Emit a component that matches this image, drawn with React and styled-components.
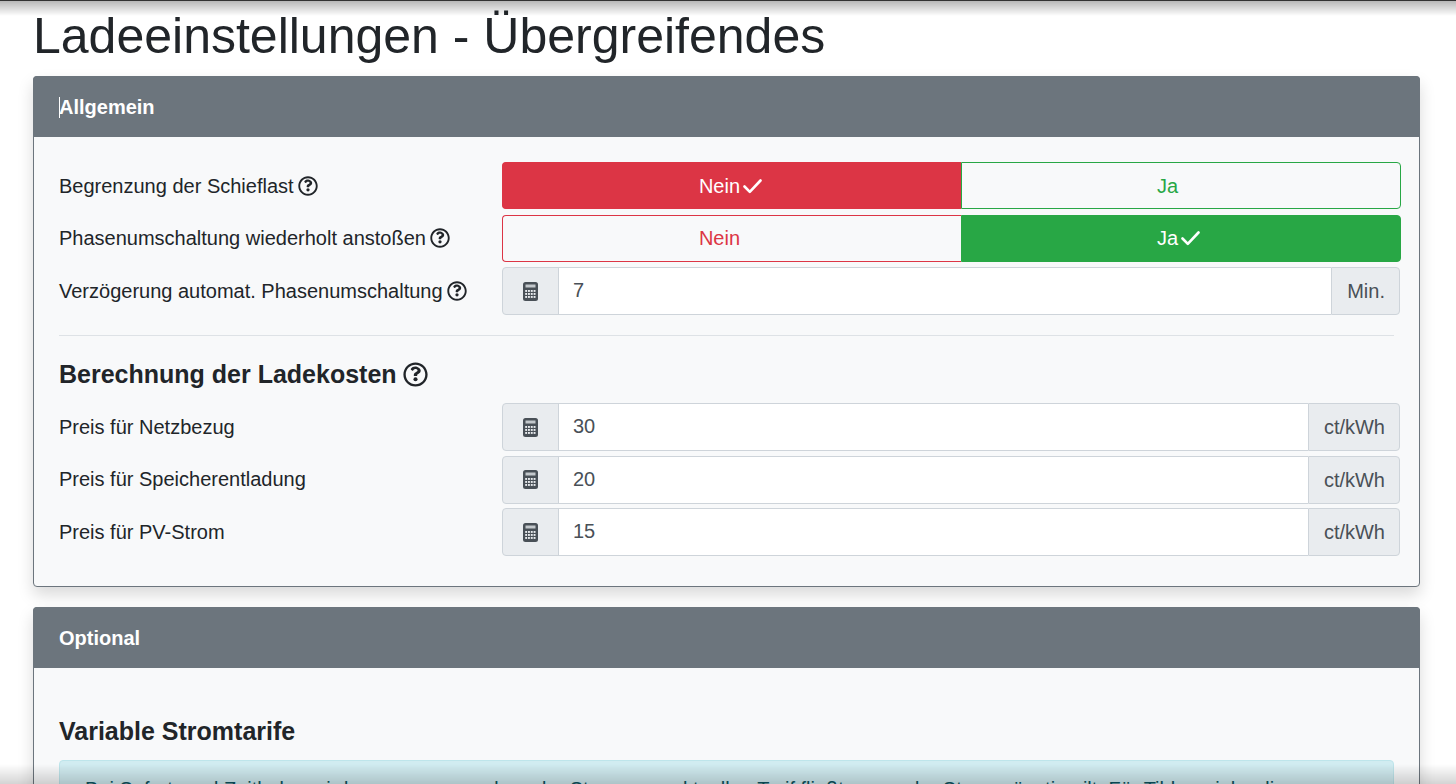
import React from 'react';
import styled, { createGlobalStyle } from 'styled-components';

const Global = createGlobalStyle`
  html, body { margin: 0; padding: 0; height: 784px; overflow: hidden; background: #fff; }
  * { box-sizing: border-box; }
  body { font-family: "Liberation Sans", Arial, sans-serif; font-size: 20px; line-height: 1.5; color: #212529; }
`;
const Page = styled.div`padding: 0 36px 0 33px; height: 784px; overflow: hidden;`;
const Title = styled.h1`margin: 0 0 10px; padding-top: 6px; font-size: 50px; font-weight: 400; line-height: 60px; color: #212529;`;
const Shade = styled.div`
  position: fixed; left: 0; right: 0; z-index: 5; pointer-events: none;
  ${p => p.$top
    ? `top: 0; height: 16px; border-top: 1px solid #333; background: linear-gradient(to bottom, rgba(0,0,0,.28), rgba(0,0,0,0));`
    : `bottom: 0; height: 20px; background: linear-gradient(to top, rgba(0,0,0,.17), rgba(0,0,0,0));`}
`;
const Card = styled.section`
  margin-bottom: 20px; background: #f8f9fa; border: 1px solid #6c757d; border-radius: 4px;
  box-shadow: 0 8px 16px rgba(0,0,0,.15);
`;
const CardHead = styled.header`
  height: 61px; margin: -1px -1px 0; padding: 0 26px; display: flex; align-items: center; position: relative;
  background: #6c757d; color: #fff; font-weight: 700; border-radius: 4px 4px 0 0;
`;
const Caret = styled.span`position: absolute; left: 26px; top: 21px; width: 1px; height: 21px; background: #fff;`;
const CardBody = styled.div`padding: 25px 25px 30px;`;
const Row = styled.div`
  display: grid; grid-template-columns: 443px 1fr; align-items: center; min-height: 48px; margin-bottom: 4.5px;
  &:last-child { margin-bottom: 0; }
`;
const Label = styled.div`display: flex; align-items: center; gap: 4px; margin-top: -0.6px;`;
const Help = styled.svg`flex: none; width: ${p => p.$size}px; height: ${p => p.$size}px; display: block;`;
const HelpIcon = ({ size = 20 }) => (
  <Help $size={size} viewBox="0 0 512 512" fill="#212529">
    <path d="M256 8C119 8 8 119 8 256s111 248 248 248 248-111 248-248S393 8 256 8zm0 448c-110.500 0-200-89.500-200-200S145.500 56 256 56s200 89.500 200 200-89.500 200-200 200z"/>
    <path d="M363 176c0 67-72 68-72 93v6c0 6.600-5.400 12-12 12h-46c-6.600 0-12-5.400-12-12v-9c0-36 27.400-50.400 48-62 17.600-9.900 28.400-16.600 28.400-29.700 0-17.300-22-28.800-39.900-28.800-23.200 0-34 11-49.100 30-4 5.100-11.500 6-16.600 2.100l-28-21.200c-5.100-3.900-6.300-11-2.700-16.300C184.800 107 210 92 250.800 92c42.600 0 112.200 33.900 112.200 84z"/>
    <circle cx="256" cy="354" r="42"/>
  </Help>
);
const Toggle = styled.div`display: grid; grid-template-columns: 459px 1fr; align-self: start; width: 899px; height: 47px;`;
const ToggleBtn = styled.div`
  display: flex; align-items: center; justify-content: center; gap: 3px; padding-right: ${p => p.$first ? 3 : 5}px;
  border: 1px solid ${p => p.$color};
  color: ${p => p.$on ? '#fff' : p.$color};
  background: ${p => p.$on ? p.$color : 'transparent'};
  border-radius: ${p => p.$first ? '4px 0 0 4px' : '0 4px 4px 0'};
  ${p => p.$first ? 'border-right-width: 0;' : ''}
`;
const Check = styled.svg`width: 19px; height: 18px; display: block; visibility: ${p => p.$shown ? 'visible' : 'hidden'};`;
const CheckIcon = ({ shown }) => (
  <Check $shown={shown} viewBox="0 0 19 18" fill="none" stroke="#fff" strokeWidth="2.600" strokeLinecap="round" strokeLinejoin="round">
    <path d="M1.500 9.500 6.800 14.800 17.500 3.500"/>
  </Check>
);
const InputGroup = styled.div`display: flex; align-items: stretch; width: 898px; height: 48px;`;
const Addon = styled.div`
  flex: none; display: flex; align-items: center; justify-content: center;
  background: #e9ecef; border: 1px solid #ced4da; color: #495057;
  border-radius: ${p => p.$left ? '4px 0 0 4px' : '0 4px 4px 0'};
  ${p => p.$left ? 'width: 57px;' : 'padding: 0 14px 0 15px;'}
`;
const Calc = styled.svg`width: 15px; height: 19px; display: block;`;
const CalcIcon = () => (
  <Calc viewBox="0 0 15 19">
    <rect width="15" height="19" rx="2.500" fill="#495057" />
    <rect x="2.500" y="2.500" width="10" height="3" fill="#c3c8cc" />
    {[8, 11, 14].flatMap(y => [2.200, 5, 7.800, 10.600].map(x => (
      <rect key={`${x}-${y}`} x={x} y={y} width="1.900" height="1.900" fill="#e9ecef" />
    )))}
  </Calc>
);
const Value = styled.div`
  flex: 1; display: flex; align-items: center; padding: 0 15px 2px 14px; margin-left: -1px;
  background: #fff; border: 1px solid #ced4da; border-right-width: 0; color: #495057;
`;
const Divider = styled.hr`margin: 20px 0; border: 0; border-top: 1px solid #dee2e6;`;
const Heading = styled.h5`
  display: flex; align-items: center; gap: 6px; margin: 20px 0 11px; font-size: 25px; line-height: 36px; font-weight: 700; color: #212529;
`;
const Note = styled.div`
  padding: 13px 25px; min-height: 90px; background: #d1ecf1; border: 1px solid #bee5eb; border-radius: 4px; color: #0c5460;
  white-space: nowrap; overflow: hidden;
`;

const InputRow = ({ label, help, value, unit }) => (
  <Row>
    <Label>{label}{help && <HelpIcon />}</Label>
    <InputGroup>
      <Addon $left><CalcIcon /></Addon>
      <Value>{value}</Value>
      <Addon>{unit}</Addon>
    </InputGroup>
  </Row>
);
const ToggleRow = ({ label, yes }) => (
  <Row>
    <Label>{label}<HelpIcon /></Label>
    <Toggle>
      <ToggleBtn $first $on={!yes} $color="#dc3545">Nein<CheckIcon shown={!yes} /></ToggleBtn>
      <ToggleBtn $on={yes} $color="#28a745">Ja<CheckIcon shown={yes} /></ToggleBtn>
    </Toggle>
  </Row>
);

export default function App() {
  return (
    <Page>
      <Global />
      <Shade $top />
      <Shade />
      <Title>Ladeeinstellungen - Übergreifendes</Title>
      <Card>
        <CardHead><Caret />Allgemein</CardHead>
        <CardBody>
          <ToggleRow label="Begrenzung der Schieflast" />
          <ToggleRow label="Phasenumschaltung wiederholt anstoßen" yes />
          <InputRow label="Verzögerung automat. Phasenumschaltung" help value="7" unit="Min." />
          <Divider />
          <Heading>Berechnung der Ladekosten <HelpIcon size={25} /></Heading>
          <InputRow label="Preis für Netzbezug" value="30" unit="ct/kWh" />
          <InputRow label="Preis für Speicherentladung" value="20" unit="ct/kWh" />
          <InputRow label="Preis für PV-Strom" value="15" unit="ct/kWh" />
        </CardBody>
      </Card>
      <Card>
        <CardHead>Optional</CardHead>
        <CardBody>
          <Heading>Variable Stromtarife</Heading>
          <Note>Bei Sofort- und Zeitladen wird angenommen, dass der Strom zum aktuellen Tarif fließt, wenn der Strom günstig gilt. Für Tibber siehe die</Note>
        </CardBody>
      </Card>
    </Page>
  );
}
